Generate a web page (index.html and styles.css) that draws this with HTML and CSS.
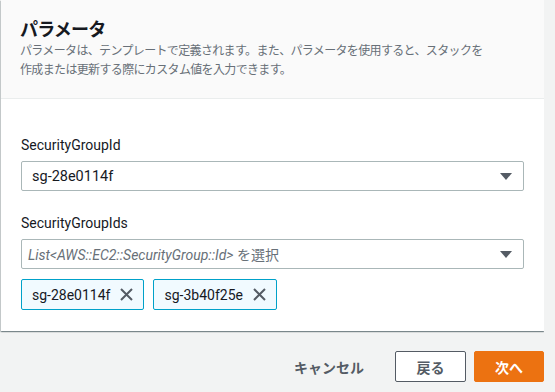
FILE: index.html
```html
<!DOCTYPE html>
<html lang="ja">
<head>
    <meta charset="UTF-8">
    <meta name="viewport" content="width=device-width, initial-scale=1.0">
    <title>パラメータ</title>
    <link rel="stylesheet" href="styles.css">
</head>
<body>
    <div class="panel">
        <div class="panel-header">
            <h2>パラメータ</h2>
            <p class="description">パラメータは、テンプレートで定義されます。また、パラメータを使用すると、スタックを<br>作成または更新する際にカスタム値を入力できます。</p>
        </div>

        <div class="panel-body">
            <div class="form-field">
                <label>SecurityGroupId</label>
                <div class="select">
                    <span class="select-value">sg-28e0114f</span>
                    <span class="caret"></span>
                </div>
            </div>

            <div class="form-field">
                <label>SecurityGroupIds</label>
                <div class="select multi">
                    <span class="placeholder">List&lt;AWS::EC2::SecurityGroup::Id&gt; <span class="upright">を選択</span></span>
                    <span class="caret"></span>
                </div>
                <div class="tokens">
                    <div class="token">
                        <span>sg-28e0114f</span>
                        <svg class="dismiss" width="13" height="13" viewBox="0 0 13 13">
                            <path d="M1 1 L12 12 M12 1 L1 12" />
                        </svg>
                    </div>
                    <div class="token">
                        <span>sg-3b40f25e</span>
                        <svg class="dismiss" width="13" height="13" viewBox="0 0 13 13">
                            <path d="M1 1 L12 12 M12 1 L1 12" />
                        </svg>
                    </div>
                </div>
            </div>
        </div>
    </div>

    <div class="actions">
        <button type="button" class="btn btn-link">キャンセル</button>
        <button type="button" class="btn btn-normal">戻る</button>
        <button type="button" class="btn btn-primary">次へ</button>
    </div>
</body>
</html>
```

FILE: styles.css
```css
* {
    box-sizing: border-box;
    margin: 0;
    padding: 0;
}
body {
    background: #f2f3f3;
    color: #16191f;
    font-family: Roboto, "Noto Sans CJK JP", sans-serif;
    font-size: 14px;
    width: 544px;
}
.panel {
    background: white;
    margin-left: 1px;
    box-shadow: 0 1px 1px 0 rgba(0, 28, 36, 0.3), 1px 1px 1px 0 rgba(0, 28, 36, 0.15), -1px 1px 1px 0 rgba(0, 28, 36, 0.15);
}
.panel-header {
    background: #fafafa;
    border-bottom: 1px solid #eaeded;
    padding: 19px 20px 18px 19px;
}
h2 {
    font-size: 18px;
    font-weight: 700;
    line-height: 22px;
    letter-spacing: -0.8px;
}
.description {
    color: #687078;
    font-size: 12px;
    line-height: 19px;
    letter-spacing: -0.65px;
    margin-top: 1px;
}
.panel-body {
    padding: 36px 20px 21px 20px;
}
.form-field + .form-field {
    margin-top: 22px;
}
label {
    display: block;
    font-size: 14px;
    line-height: 20px;
    margin-bottom: 6px;
}
.select {
    display: flex;
    align-items: center;
    justify-content: space-between;
    height: 30px;
    border: 1px solid #aab7b8;
    border-radius: 2px;
    padding: 0 11px 0 10px;
    font-size: 14.5px;
}
.select.multi {
    padding-left: 6px;
    font-size: 14px;
}
.placeholder {
    color: #687078;
    font-style: italic;
}
.placeholder .upright {
    font-style: normal;
}
.caret {
    width: 0;
    height: 0;
    border-left: 6px solid transparent;
    border-right: 6px solid transparent;
    border-top: 7px solid #545b64;
}
.tokens {
    display: flex;
    gap: 9px;
    margin-top: 10px;
}
.token {
    display: flex;
    align-items: center;
    gap: 10px;
    height: 31px;
    padding: 0 10px;
    background: #f1faff;
    border: 1px solid #00a1c9;
    border-radius: 2px;
    font-size: 14px;
}
.dismiss path {
    stroke: #545b64;
    stroke-width: 2;
    fill: none;
}
.actions {
    display: flex;
    justify-content: flex-end;
    align-items: center;
    gap: 8px;
    padding-top: 20px;
}
.btn {
    height: 31px;
    padding: 0 20px;
    font-family: Roboto, "Noto Sans CJK JP", sans-serif;
    font-size: 14px;
    font-weight: 700;
    border-radius: 2px;
    cursor: pointer;
}
.btn-link {
    background: none;
    border: none;
    color: #545b64;
    margin-right: 3px;
}
.btn-normal {
    background: white;
    border: 1px solid #545b64;
    color: #545b64;
    width: 71px;
}
.btn-primary {
    background: #ec7211;
    border: 1px solid #ec7211;
    color: white;
    width: 70px;
}
```
